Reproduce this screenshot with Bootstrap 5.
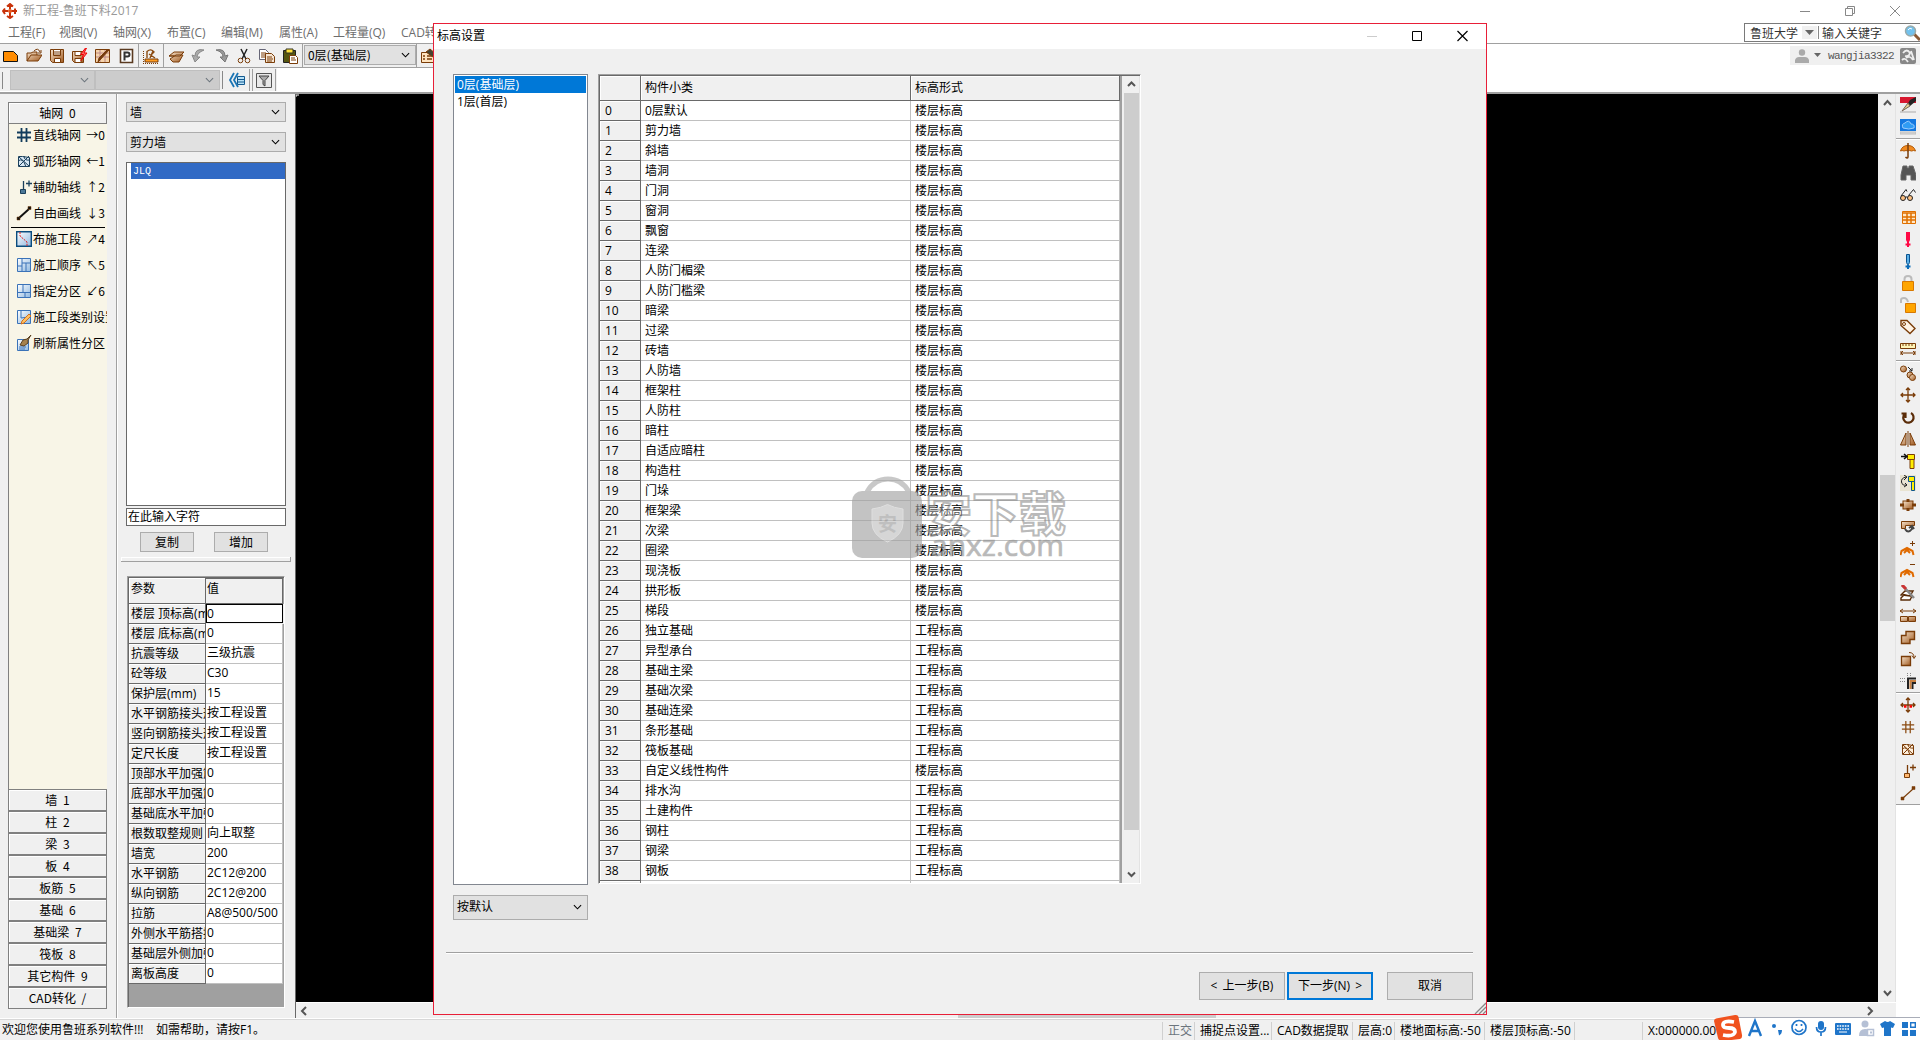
<!DOCTYPE html>
<html lang="zh-CN">
<head>
<meta charset="utf-8">
<title>新工程-鲁班下料2017</title>
<link href="https://cdn.jsdelivr.net/npm/bootstrap@5.3.0/dist/css/bootstrap.min.css" rel="stylesheet">
<style>
body{width:1920px;height:1040px;overflow:hidden;background:#f0f0f0;color:#000;font:12px/16px "Open Sans","Noto Sans CJK SC",sans-serif;white-space:nowrap}
svg{display:block;flex:none}
.sun{font-family:"Noto Sans CJK SC",sans-serif}
.app{width:1920px;height:1040px;overflow:hidden}
.titlebar{height:23px;background:#fff;color:#999;padding:0 0 1px 2px}
.titlebar .caption{margin-left:5px}
.winbtns{gap:33px;padding-right:19px}
.menus{height:20px;background:#fff;color:#6d6d6d}
.menus span{display:block;line-height:20px}
.searchbox{width:176px;height:19px;border:1px solid #7a7a7a;border-right:0;color:#333;background:#fff;padding-left:5px}
.band1{height:25px;border-top:1px solid #a0a0a0;background:#fff}
.strip{height:24px;background:#f0f0f0;border-bottom:1px solid #a0a0a0}
.grp{height:24px;border-right:1px solid #a0a0a0}
.grp-file{padding:0 4px 0 2.5px;gap:7.1px}
.grp-draw{padding:0 4px}
.grp-edit{padding:0 4px 0 4px;gap:6.8px}
.combo{background:#e1e1e1;border:1px solid #acacac;padding:0 5px 0 3px}
.combo.off{background:#ccc;border-color:#bfbfbf}
.userbox{width:130px;height:19px;margin-top:2px;background:#f0f0f0;color:#555}
.mono{font-family:"Liberation Mono",monospace;font-size:10px}
.band2{height:26px;background:#fff;border-bottom:2px solid #a0a0a0}
.band2 .strip{border:0;height:23px}
.work{height:925px}
.navcol{width:117px;border-right:1px solid #a0a0a0;padding:8px 9px 0 8px}
.navbtn{height:22px;width:99px;border:1px solid #808080;box-shadow:inset 1px 1px #fff;background:#f0f0f0;line-height:19px;text-align:center;word-spacing:3px}
.cream{width:99px;height:665px;background:#f8f5e7;border-left:1px solid #808080;overflow:hidden}
.tool{height:26px;padding:0 2px 4px 7px;overflow:hidden}
.tool b{font-weight:400;margin-left:1px;flex:1}
.tool i{font-style:normal;flex:none}
.toolline{border-top:1px solid #000;margin:-1px 2px 0 2px;height:1px}
.propcol{width:179px;border-right:1px solid #696969;padding:8px 10px 0 8px;border-left:1px solid #fff}
.pick{width:160px;height:20px;margin-bottom:10px;border:1px solid #acacac}
.names{width:160px;height:344px;background:#fff;border:1px solid #696969;padding:0 0 0 4px}
.names div{height:16px;background:#316ac5;color:#fff;line-height:17px;padding-left:2px}
.entry{width:160px;height:18px;margin-top:2px;background:#fff;border:1px solid #696969;line-height:14px;padding-left:1px}
.small-btn{width:54px;height:20px;background:#e1e1e1;border:1px solid #acacac;line-height:17px;text-align:center}
.splitbar{height:5px;width:170px;margin:5px 0 14px -5px;border:solid #a0a0a0;border-width:0 1px 1px 0;box-shadow:inset 1px 1px #fff}
.pgrid{width:158px;height:432px;margin-left:1px;border:1px solid #a0a0a0;border-right-color:#fff;border-bottom-color:#fff;box-shadow:inset 1px 1px #696969;padding:1px 0 0 1px;background:#a0a0a0}
.prow{height:20px}
.prow .k{width:77px;overflow:hidden;background:#f0f0f0;border-right:1px solid #696969;border-bottom:1px solid #696969;line-height:20px;padding-left:2px;box-shadow:inset 1px 1px #fff}
.prow .v{width:77px;overflow:hidden;background:#fff;border-right:1px solid #c0c0c0;border-bottom:1px solid #c0c0c0;line-height:17px;padding-left:1px}
.prow.hd{height:26px}.prow.hd .k{line-height:22px}.prow.hd .v{background:#f0f0f0;line-height:20px;border-top:1px solid #696969;border-color:#696969}
.prow.cur .v{border:1px solid #000;padding-left:0;line-height:17px;height:19px}
.prow.cur{background:#f0f0f0}
.canvas{width:1582px;height:908px;background:#000}
.vsb{width:18px;padding-left:1px;background:#f0f0f0;border-right:1px solid #e3e3e3}
.vsb .thumb{width:15px;background:#cdcdcd}
.hsb{height:17px;background:#f0f0f0;border-top:1px solid #fff}
.hthumb{width:258px;height:15px;background:#cdcdcd;margin:0 644px 0 auto}
.side{width:24px;background:#fff}
.side .set{background:#f0f0f0;border-bottom:1px solid #a0a0a0;margin-bottom:1px}
.side .cell{height:22px}
.status{height:21px;border-top:1px solid #d7d7d7;box-shadow:0 -1px #fff;padding-left:2px;line-height:19px;background:#f0f0f0}
.status .pane{border-left:1px solid #d0d0d0;padding-left:5px;height:18px;margin-top:2px;line-height:17px}
.dialog-win{position:absolute;left:433px;top:23px;width:1054px;height:992px;border:1px solid #e81f38;background:#f0f0f0}
.dlg-title{height:25px;background:#fff;padding:0 17px 2px 3px}
.floors{width:135px;height:811px;background:#fff;border:1px solid #828790;padding:1px}
.floors div{height:17px;line-height:17px;padding-left:2px}
.floors .on{background:#0078d7;color:#fff}
.bigcombo{width:135px;height:25px;margin-top:10px;padding-bottom:1px}
.grid{width:543px;height:810px;border:1px solid #a0a0a0;border-right-color:#fff;border-bottom-color:#fff;box-shadow:inset 1px 1px #696969;padding:1px 0 0 1px;overflow:hidden}
.rows{width:523px;height:807px;overflow:hidden;background:#a0a0a0}
.g{height:20px}
.g .n{width:41px;background:#f0f0f0;border-right:1px solid #696969;border-bottom:1px solid #696969;box-shadow:inset 1px 1px #fff;padding-left:5px;line-height:19px}
.g .a{width:270px;background:#fff;border-right:1px solid #c0c0c0;border-bottom:1px solid #c0c0c0;padding-left:4px;line-height:19px}
.g .b{width:209px;background:#fff;border-right:1px solid #c0c0c0;border-bottom:1px solid #c0c0c0;padding-left:4px;line-height:19px}
.g.hd{height:25px}.g.hd div{background:#f0f0f0;border-color:#696969;line-height:24px;box-shadow:inset 1px 1px #fff}
.rule{height:2px;width:1027px;margin:32px 0 0 12px;background:#a0a0a0;border-bottom:1px solid #fff}
.dbtn{width:86px;height:28px;background:#e1e1e1;border:1px solid #adadad;line-height:25px;text-align:center;word-spacing:2px}
.dbtn.def{border:2px solid #0078d7;line-height:23px}
.grip{position:absolute;right:0;bottom:0}
.wmark{position:absolute;left:850px;top:475px;opacity:.62}
.ime{position:absolute;left:1712px;top:1014px}
</style>
<script src="https://cdn.jsdelivr.net/npm/bootstrap@5.3.0/dist/js/bootstrap.bundle.min.js"></script>
</head>
<body>
<svg width="0" height="0" class="position-absolute"><defs>
<linearGradient id="br" x1="0" y1="0" x2="1" y2="1"><stop offset="0" stop-color="#f6e3cd"/><stop offset="1" stop-color="#a05a20"/></linearGradient>
<linearGradient id="bl" x1="0" y1="0" x2="1" y2="1"><stop offset="0" stop-color="#fff"/><stop offset="1" stop-color="#8fb8e0"/></linearGradient>
<symbol id="chev" viewBox="0 0 10 6"><path d="M1 1l4 4 4-4" fill="none" stroke="currentColor" stroke-width="1.2"/></symbol>
</defs></svg>
<div class="app d-flex flex-column">
  <div class="titlebar d-flex align-items-center">
    <svg width="16" height="16" viewBox="0 0 16 16" fill="none" stroke="#c8320a" stroke-width="2"><path d="M8 1v5M8 9v6M1 8h5M8 8h7M5 3.500L8 1l3 2.500M5 13l3 2 3-2M3 5.500L1 8l2 3M13 5.500V11"/><circle cx="8" cy="8" r="2" fill="#e85a20" stroke="none"/></svg>
    <span class="caption me-auto">新工程-鲁班下料2017</span>
    <div class="winbtns d-flex align-items-center">
      <svg width="12" height="12" stroke="#888"><path d="M1 6.500h10"/></svg>
      <svg width="12" height="12" stroke="#888" fill="none"><path d="M1.500 3.500h7v7h-7zM3.500 3V1.500h7v7H9"/></svg>
      <svg width="12" height="12" stroke="#888"><path d="M1 1l10 10M11 1L1 11"/></svg>
    </div>
  </div>
  <div class="menus d-flex">
    <div class="d-flex me-auto ps-2" id="menuItems"></div>
    <div class="searchbox d-flex align-items-center sun">
      <span>鲁班大学</span>
      <svg class="ms-1" width="15" height="13"><rect width="15" height="13" fill="#f0f0f0"/><path d="M3 4h9l-4.500 5z" fill="#666"/></svg>
      <svg width="5" height="15" stroke="#888"><path d="M1.500 1v13"/></svg>
      <span class="me-auto">输入关键字</span>
      <svg width="16" height="16" viewBox="0 0 16 16"><path d="M10 9l6 6" stroke="#8b5a35" stroke-width="3"/><circle cx="6.500" cy="6" r="5" fill="#72c2ee" stroke="#9aa" stroke-width="1.500"/><path d="M4 5q2-3 4-1" stroke="#fff" fill="none"/></svg>
    </div>
  </div>
  <div class="band1 d-flex">
    <div class="strip d-flex me-auto" style="width:640px" id="topTools"></div>
    <div class="userbox d-flex align-items-center">
      <svg class="ms-1" width="16" height="16" fill="#aaa"><circle cx="8" cy="4.500" r="3.200"/><path d="M1 15v-3q1-3 4-3h6q3 0 4 3v3z"/></svg>
      <svg class="ms-1" width="8" height="8"><path d="M0 1h7L3.500 5z" fill="#666"/></svg>
      <span class="mono" style="margin-left:6px;font-size:11px;letter-spacing:-.6px">wangjia3322</span>
      <svg class="ms-auto me-1" width="16" height="16"><rect width="16" height="16" rx="2" fill="#888"/><path d="M3 5q4-5 7 0-1 4-5 3M6 10q4-3 7 2M2 12q3-3 6 2M11 3l3 9" stroke="#eee" stroke-width="1.800" fill="none"/></svg>
    </div>
  </div>
  <div class="band2 d-flex">
    <div class="strip d-flex align-items-center" style="width:277px">
      <svg width="10" height="20"><path d="M2.500 2v17" stroke="#888"/></svg>
      <div class="combo off d-flex align-items-center justify-content-end text-secondary" style="width:85px;height:20px"><svg width="9" height="6"><use href="#chev"/></svg></div>
      <div class="combo off d-flex align-items-center justify-content-end text-secondary" style="width:125px;height:20px"><svg width="9" height="6"><use href="#chev"/></svg></div>
      <svg width="56" height="22"><path d="M2.500 2v18" stroke="#888"/><path d="M14 4l-4 7 4 7M18 4l-4 7 4 7" fill="none" stroke="#1a75b5" stroke-width="1.800"/><path d="M17.500 7.500h7v8h-7zM18 10.500h6M18 13h6" fill="#b8e2f8" stroke="#145a90"/><path d="M29.500 0v22M32.500 0v22" stroke="#a0a0a0"/><path d="M36.500 4.500h15v14h-15z" fill="#e8e8e8" stroke="#555"/><path d="M39 7h10l-4 4.500V17l-2-1.500v-4z" fill="#aaa" stroke="#444"/><path d="M55.500 0v22" stroke="#a0a0a0"/></svg>
    </div>
  </div>
  <div class="work d-flex">
    <div class="navcol sun">
      <div class="navbtn">轴网 0</div>
      <div class="cream" id="cream"></div>
      <div id="navBottom"></div>
    </div>
    <div class="propcol">
      <div class="pick combo d-flex align-items-center justify-content-between sun">墙<svg width="9" height="6"><use href="#chev"/></svg></div>
      <div class="pick combo d-flex align-items-center justify-content-between sun">剪力墙<svg width="9" height="6"><use href="#chev"/></svg></div>
      <div class="names"><div class="mono">JLQ</div></div>
      <div class="entry sun">在此输入字符</div>
      <div class="d-flex sun" style="padding:6px 0 0 14px;gap:20px"><div class="small-btn">复制</div><div class="small-btn">增加</div></div>
      <div class="splitbar"></div>
      <div class="pgrid" id="pgrid"></div>
    </div>
    <div class="d-flex flex-column">
      <div class="d-flex">
        <div class="canvas"><svg width="4" height="4"><path d="M0 3V1h3" stroke="#fff" fill="none"/></svg></div>
        <div class="vsb d-flex flex-column align-items-center">
          <svg width="15" height="18"><path d="M4 11l3.500-4 3.500 4" stroke="#555" stroke-width="2" fill="none"/></svg>
          <div class="thumb" style="height:146px;margin-top:363px"></div>
          <svg class="mt-auto" width="15" height="18"><path d="M4 7l3.500 4L11 7" stroke="#555" stroke-width="2" fill="none"/></svg>
        </div>
      </div>
      <div class="hsb d-flex">
        <svg width="16" height="15"><path d="M10 4L6 8l4 4" stroke="#555" stroke-width="2" fill="none"/></svg>
        <div class="hthumb"></div>
        <svg width="36" height="15"><path d="M8 4l4 4-4 4" stroke="#555" stroke-width="2" fill="none"/></svg>
      </div>
    </div>
    <div class="side" id="side"></div>
  </div>
  <div class="status d-flex">
    <div style="width:1160px">欢迎您使用鲁班系列软件!!! &nbsp;&nbsp; 如需帮助，请按F1。</div>
    <div class="pane text-secondary" style="width:32px">正交</div>
    <div class="pane" style="width:77px">捕捉点设置...</div>
    <div class="pane" style="width:81px">CAD数据提取</div>
    <div class="pane" style="width:42px">层高:0</div>
    <div class="pane" style="width:90px">楼地面标高:-50</div>
    <div class="pane" style="width:90px">楼层顶标高:-50</div>
    <div class="pane" style="width:68px"></div>
    <div class="pane">X:000000.00</div>
  </div>
</div>

<div class="dialog-win">
  <div class="dlg-title d-flex align-items-center">
    <span class="me-auto">标高设置</span>
    <svg width="104" height="12" fill="none"><path d="M2 6.500h10" stroke="#ccc"/><path d="M47.500 1.500h9v9h-9z" stroke="#000"/><path d="M92.500 1l10 10M102.500 1l-10 10" stroke="#000" stroke-width="1.200"/></svg>
  </div>
  <div class="d-flex" style="padding:25px 0 0 19px;gap:10px">
    <div>
      <div class="floors"><div class="on">0层(基础层)</div><div>1层(首层)</div></div>
      <div class="combo bigcombo d-flex align-items-center justify-content-between">按默认<svg width="9" height="6"><use href="#chev"/></svg></div>
    </div>
    <div class="grid d-flex">
      <div class="rows" id="rows"></div>
      <div class="vsb flex-grow-1 d-flex flex-column align-items-center">
        <svg width="15" height="17"><path d="M4 10l3.500-3.500L11 10" stroke="#555" stroke-width="2" fill="none"/></svg>
        <div class="thumb" style="height:737px"></div>
        <svg class="mt-auto" width="15" height="17"><path d="M4 6.500l3.500 3.500L11 6.500" stroke="#555" stroke-width="2" fill="none"/></svg>
      </div>
    </div>
  </div>
  <div class="rule"></div>
  <div class="d-flex justify-content-end" style="padding:18px 13px 0 0"><div class="dbtn">&lt; 上一步(B)</div><div class="dbtn def" style="margin:0 14px 0 2px">下一步(N) &gt;</div><div class="dbtn">取消</div></div>
  <svg class="grip" width="12" height="12"><path d="M1 12L12 1M5 12l7-7M9 12l3-3" stroke="#888" stroke-width="1.300"/></svg>
</div>

<svg class="wmark" width="220" height="86">
  <path d="M17 17Q24 4 38 4t21 13" fill="none" stroke="#a8a8a8" stroke-width="5"/>
  <rect x="2" y="16" width="70" height="67" rx="10" fill="#a0a0a0"/>
  <path d="M22 34q9-1 15.500-4.500Q44 33 53 34v14q0 12-15.500 19Q22 60 22 48z" fill="#bdbdbd" stroke="#ccc"/>
  <text x="28" y="56" font-size="19" font-weight="700" fill="#999" font-family="Noto Sans CJK SC">安</text>
  <text x="75" y="56" font-size="47" font-weight="700" fill="#fff" fill-opacity=".5" stroke="#909090" stroke-width="2" font-family="Noto Sans CJK SC" textLength="141">安下载</text>
  <text x="81" y="81" font-size="30" fill="#8f8f8f" stroke="#8f8f8f" stroke-width=".7" font-family="Open Sans" textLength="133">anxz.com</text>
</svg>

<svg class="ime" width="208" height="26" viewBox="0 0 208 26">
  <path d="M12 3.500h196V26H12z" fill="#fff"/><path d="M26 3.500h182" stroke="#a9adb8"/>
  <path d="M2 7q0-2 2-2.500L23 1q3-.5 3.500 2L30 21q.5 3-2 4l-17 2q-4 0-5-3z" fill="#f0521e"/>
  <path d="M22 8q-11-2-11 3 0 3 6 3t6 4q-1 5-12 3" fill="none" stroke="#fff" stroke-width="3.800"/>
  <g fill="none" stroke="#1f75c9" stroke-width="2.400"><path d="M37 22l6-15 6 15M39.500 17h8"/><circle cx="87" cy="13.500" r="7" stroke-width="1.700"/><path d="M83 15q4 5 8 0" stroke-width="1.500"/><path d="M84.500 10v2M89.500 10v2" stroke-width="1.700"/><path d="M104.500 13q0 5 4.500 5t4.500-5M109 18v4" stroke-width="1.700"/></g>
  <g fill="#1f75c9"><circle cx="62" cy="12" r="2"/><path d="M66 16h4q0 4-3 5.500z"/><rect x="106" y="7" width="6" height="9" rx="3"/><rect x="123" y="9" width="16" height="12" rx="1"/><path d="M168 10l5-3q3 2 5 0l5 3-2 4-2-.5V22h-7v-8.500l-2 .5z"/><path d="M190 8h6v6h-6zM190 16h6v6h-6zM198 16h6v6h-6z"/></g>
  <path d="M198.700 8.700h4.600v4.600h-4.600z" fill="none" stroke="#1f75c9" stroke-width="1.400"/>
  <path d="M125 12h12M125 15h12" stroke="#fff" stroke-width="1.600" stroke-dasharray="1.600 1"/><path d="M127 18h8" stroke="#fff"/>
  <g fill="#b5c0d5"><circle cx="153" cy="10" r="3.500"/><path d="M147 22q0-7 6-7 3 0 4 1v6z"/><path d="M155.500 15.500h6v6h-6z" fill="#fff" stroke="#b5c0d5" stroke-width="1.500"/><path d="M158 17.500h2v2h-2z"/></g>
</svg>

<script>
const $ = id => document.getElementById(id);
const svg = (body, w = 16, h = 16) => `<svg width="${w}" height="${h}" viewBox="0 0 16 16" fill="none" stroke="#7a3c08">${body}</svg>`;

$('menuItems').innerHTML = [['工程(F)',51],['视图(V)',54],['轴网(X)',54],['布置(C)',54],['编辑(M)',58],['属性(A)',54],['工程量(Q)',68],['CAD转化(D)',80]]
  .map(([t,w]) => `<span style="width:${w}px">${t}</span>`).join('');

/* main toolbar */
const file = [
 '<path d="M.5 3.500h10l4 4V13.500H.5z" fill="#ff8c00" stroke="#111"/>',
 '<path d="M1 13V5h4l2-1h4v3M1 13l4-6h11l-4 6z" fill="url(#br)"/><path d="M8 3q4-4 6 1m1-2v3h-3"/>',
 '<path d="M1.500 1.500h13v13h-11l-2-2z" fill="url(#br)"/><path d="M4.500 1.500h7v6h-7zM5.500 10.500h6v4h-6z" fill="#fff"/><path d="M5 4h6M5 6h6"/>',
 '<path d="M.5 3.500h11v11h-9l-2-2z" fill="url(#br)"/><path d="M3 10.500h6v4H3zM3 3.500h6v4H3z" fill="#fff"/><path d="M13.500 0l-5 6.500h3l-2.500 6 6-7.500h-3l2.500-5z" fill="#f66" stroke="#e00"/>',
 '<path d="M.5 1.500h14v13H.5z" fill="#f5d3aa"/><path d="M1 5h13M1 9h13M5 2v12M10 2v12" stroke="#b88"/><path d="M14 2L5 12l-2 2 1-4 8-8z" fill="#733c10"/>',
 '<path d="M2.500 1.500h12v13h-12z" fill="#fff" stroke="#5a3a20" stroke-width="1.600"/><path d="M6.500 12.500V4.500h3q2 0 2 2t-2 2h-3" stroke="#333" stroke-width="2"/>'];
const draw = ['<path d="M2 11h13v3H2z" fill="#ff9c20"/><path d="M4 10V3.500Q8 0 11 4l-3 3M6 6l6 4M10 3l-3 7" stroke="#8a4a10" stroke-width="1.400"/><path d="M0 15.500h15M.5 3v12" stroke-dasharray="1 1"/>'];
const edit = [
 '<path d="M1 8l5-4h10l-4 4zM2 11l3 3h6l4-7H8z" fill="url(#br)"/><path d="M1 8h5"/>',
 '<path d="M14 2Q5 0 5 8l-3-1 3 7 5-5-3 0q0-4 7-7z" fill="#aaa" stroke="#888" transform="translate(-1)"/>',
 '<path d="M2 2q9-2 9 6l3-1-3 7-5-5h3Q9 4 2 2z" fill="#999" stroke="#777"/>',
 '<path d="M5 1l5 10M11 1L6 11" stroke="#222" stroke-width="1.500"/><circle cx="4.500" cy="12.500" r="2.300"/><circle cx="11.500" cy="12.500" r="2.300"/>',
 '<path d="M.5 1.500h6l3 3v7h-9z" fill="#fff" stroke="#667"/><path d="M6.500 5.500h6l3 3v6h-9z" fill="#f6e6d4"/><path d="M2 5h5M2 7h4M2 9h4M8 9h5M8 11h6M8 13h5"/>',
 '<path d="M1.500 2.500h12v12h-12z" fill="#565610" stroke="#222"/><path d="M4 1h7v4H4z" fill="#ffe23c" stroke="#332"/><path d="M7.500 7.500h6l2 2v6h-8z" fill="#fff"/><path d="M9 10h4M9 12h5"/>'];
const group = (a, cls) => `<div class="grp ${cls} d-flex align-items-center">${a.map(i => svg(i)).join('')}</div>`;
$('topTools').innerHTML = group(file, 'grp-file') + group(draw, 'grp-draw') + group(edit, 'grp-edit') +
 `<div class="combo d-flex align-items-center justify-content-between sun" style="width:112px;height:20px;margin:1px 0 0 1px">0层(基础层)<svg width="9" height="6"><use href="#chev"/></svg></div>
  <div style="border-left:1px solid #a0a0a0;padding:4px 3px;height:24px">${svg('<path d="M1.500 4.500h12v10h-12z" fill="#ffe4c0"/><path d="M3 8h2M7 8h5M3 11h2M7 11h5" stroke-width="1.600"/><path d="M6 4l4-3 6 5-3 3z" fill="#443"/>')}</div>`;

/* component palette */
const hash = (c, w = 1.8) => `<path d="M1 5.500h14M1 10.500h14M5.500 1v14M10.500 1v14" stroke="${c}" stroke-width="${w}"/>`;
const arc = (c, f) => `<path d="M2.500 3.500h4l7 1v9h-11z" fill="${f}" stroke="${c}"/><path d="M3 13L13 3M3 4l10 9M2 8q5-4 8 6M8 3q0 5 6 4" stroke="${c}"/>`;
const node = (c, f) => `<path d="M7.500 2v8M10 4.500h6M13 1.500v6" stroke="${c}" stroke-width="1.300"/><path d="M4.500 10.500h5v4h-5z" fill="${f}" stroke="${c}"/>`;
const line = (c, w = 2) => `<path d="M3 13L13 4" stroke="${c}" stroke-width="${w}"/><path d="M1 12h3v3H1zM12 1.500h3v3h-3z" fill="${c}" stroke-width=".5"/>`;
const area = '<path d="M1.500 1.500h13v13h-13z" fill="url(#bl)" stroke="#3a72b8"/>';
const items = [
 [hash('#123c5c'),'直线轴网','→0'],[arc('#1b405c','#d8e8f5'),'弧形轴网','←1'],[node('#1b405c','#4c7898'),'辅助轴线','↑2'],[line('#111'),'自由画线','↓3'],
 ['<path d="M.7.7h14.600v14.600H.7z" fill="url(#bl)" stroke="#0a4c7e" stroke-width="1.400"/><path d="M4 1v4l7 6v4" stroke="#e02020" stroke-dasharray="2 1"/>','布施工段','↗4'],
 [area+'<path d="M6 2v12M2 9h4M6 6h8M10 6v8" stroke="#3a72b8"/>','施工顺序','↖5'],
 [area+'<path d="M2 9.500h12M7 2v7M9 10v4" stroke="#3a72b8"/>','指定分区','↙6'],
 [area+'<path d="M5 2v7l8-1" stroke="#3a72b8"/><path d="M13 5L6 12l-1 3 3-1 7-7z" fill="#ffc060" stroke="#d07020"/>','施工段类别设置',''],
 ['<path d="M1.500 4.500h11v11h-11z" fill="url(#bl)" stroke="#3a72b8"/><path d="M3 12h7M3 14h6" stroke="#3a72b8"/><path d="M15 0l-4 4-4 1-3 5 4 1 4-3 0-3z" fill="#a5814c" stroke="#5b4020"/>','刷新属性分区','']];
$('cream').innerHTML = items.map(([i,t,k],n) => (n==4?'<div class="toolline"></div>':'') + `<div class="tool d-flex align-items-center">${svg(i)}<b>${t}</b><i>${k}</i></div>`).join('');
$('navBottom').innerHTML = ['墙 1','柱 2','梁 3','板 4','板筋 5','基础 6','基础梁 7','筏板 8','其它构件 9','CAD转化 /'].map(t => `<div class="navbtn">${t}</div>`).join('');

/* parameters */
const props = [['参数','值'],['楼层 顶标高(mm)','0'],['楼层 底标高(mm)','0'],['抗震等级','三级抗震'],['砼等级','C30'],['保护层(mm)','15'],['水平钢筋接头形式','按工程设置'],['竖向钢筋接头形式','按工程设置'],['定尺长度','按工程设置'],['顶部水平加强筋','0'],['底部水平加强筋','0'],['基础底水平加强筋','0'],['根数取整规则','向上取整'],['墙宽','200'],['水平钢筋','2C12@200'],['纵向钢筋','2C12@200'],['拉筋','A8@500/500'],['外侧水平筋搭接','0'],['基础层外侧加强筋','0'],['离板高度','0']];
$('pgrid').innerHTML = props.map(([k,v],n) => `<div class="prow d-flex ${n==0?'hd':n==1?'cur':''}"><div class="k">${k}</div><div class="v">${v}</div></div>`).join('');

/* elevation table */
const names = '0层默认 剪力墙 斜墙 墙洞 门洞 窗洞 飘窗 连梁 人防门楣梁 人防门槛梁 暗梁 过梁 砖墙 人防墙 框架柱 人防柱 暗柱 自适应暗柱 构造柱 门垛 框架梁 次梁 圈梁 现浇板 拱形板 梯段 独立基础 异型承台 基础主梁 基础次梁 基础连梁 条形基础 筏板基础 自定义线性构件 排水沟 土建构件 钢柱 钢梁 钢板'.split(' ');
const row = (n,a,b,c='') => `<div class="g d-flex ${c}"><div class="n">${n}</div><div class="a">${a}</div><div class="b">${b}</div></div>`;
$('rows').innerHTML = row('','构件小类','标高形式','hd') + names.map((t,n) => row(n, t, n < 26 || n == 33 ? '楼层标高' : '工程标高')).join('') + row('','','');

/* side toolbar */
const chevron = '<path d="M1.500 12l1-4L8 5l5.500 3 1 4M5 10l3-3 3 3" stroke="#e06a00" stroke-width="2"/>';
const move = '<path d="M8 1v14M1 8h14M6 3l2-2 2 2M6 13l2 2 2-2M3 6L1 8l2 2M13 6l2 2-2 2" stroke-width="1.300"/>';
const sets = [
 ['<path d="M0 1h16v14H0z" fill="#eee" stroke="none"/><path d="M0 0h16v6H0z" fill="#d81830" stroke="none"/><path d="M0 15h16" stroke="#aaa"/><path d="M16 0l-6 3-3 5 3 1 6-5z" fill="#222" stroke="none"/><path d="M8 6l-6 8 8-5z" fill="#e8cf90" stroke="#765"/>',
  '<path d="M0 13h16v2H0z" fill="#ddd" stroke="#bbb"/><path d="M0 0h16v12H0z" fill="#1478e0" stroke="none"/><path d="M3 9q-2-4 2-5 4-4 6 1 4 0 3 4-5 2-11 0z" fill="#2f9cf4" stroke="#9cf"/>'],
 ['<path d="M.5 8Q2 2.500 8 2.500T15.500 8q-2-1-4 0-2-1-3.500 0-2-1-4 0-2-1-3.500 0z" fill="#f08a20" stroke="#b05a08"/><path d="M8 0v14q-.5 2-2.500 0" stroke-width="1.500"/>',
  '<path d="M3 1h4v2h2V1h4l3 9v5h-5v-5H6v5H1v-5z" fill="#555" stroke="#666"/>',
  '<circle cx="3" cy="11" r="2.500" fill="#ffc080" stroke="#222"/><circle cx="10" cy="11" r="2.500" fill="#ffc080" stroke="#222"/><path d="M1 9l5-6.500 1 2M8.500 8.500l5-6 2 3M5.500 10h2" stroke="#222"/>',
  '<path d="M2.500 2.500h13v12h-13z" fill="#ffe8c8" stroke="#e07000"/><path d="M2 4h14M3 8h12M3 11h12M7 4v10M11 4v10" stroke="#e07000" stroke-width="1.500"/>',
  '<path d="M6 1h4v8l-1 2H7l-1-2z" fill="#ff0a46" stroke="none"/><path d="M5.500 13.500h5M8 11v5" stroke="#ff0a46" stroke-width="2"/>',
  '<path d="M6.500 1.500h3v8l-1 2h-1l-1-2z" fill="#5bb0e8" stroke="#0a5490"/><path d="M5.500 13.500h5M8 12v4" stroke="#0a6cb8" stroke-width="2"/>',
  '<path d="M4.500 7V4q0-3 3.500-3t3.500 3v3" stroke="#bbb" stroke-width="2"/><path d="M2.500 6.500h11v9h-11z" fill="#ffa500" stroke="#d87800"/>',
  '<path d="M1 6V3q0-2 3-2t4 4" stroke="#bbb" stroke-width="2"/><path d="M5.500 6.500h10v9h-10z" fill="#ffa500" stroke="#d87800"/>',
  '<path d="M1 1.500h6l8 8-5 5-9-8z" fill="#fff3e4" stroke-width="1.400"/><circle cx="4" cy="5" r="1.500"/>',
  '<path d="M.5 2.500h15v5H.5z" fill="#fff5b8"/><path d="M3 3v2M6 3v2M9 3v2M12 3v2M1 12h14M1 10v4M15 10v4M3 10l-2 2 2 2M13 10l2 2-2 2"/>'],
 ['<circle cx="3.500" cy="4" r="3" fill="url(#br)"/><circle cx="10" cy="10" r="3" fill="url(#br)"/><circle cx="12.500" cy="12.500" r="3" fill="url(#br)"/><path d="M8 2l4 4m0-3v3H9" stroke="#222"/>',
  move,'<path d="M4.500 5a5.200 5.200 0 1 0 6.500-1M5.500 9V4.500H1.500" stroke="#5a2c08" stroke-width="2.200"/>',
  '<path d="M6 2v12H.5zM10 2v12h5.500z" fill="url(#br)"/><path d="M8 0v16"/>',
  '<path d="M7.500 1.500h7v5h-7zM10 6.500h4v9h-4z" fill="#fe0"/><path d="M1 3.500h5M4 1l3 2.500L4 6" stroke="#111" stroke-width="1.500"/>',
  '<path d="M0 0h16v16H0z" fill="#e9e4d2" stroke="none"/><path d="M8.500 1.500h6v5h-6zM11.500 6.500h3v9h-3z" fill="#fe0" stroke="#0a5490"/><path d="M6 2Q1 3 1.500 7T7 10M4 0l3 2-3 3M5 8l2 2-3 2" stroke="#222"/>',
  '<rect x="3" y="4" width="10" height="8" fill="url(#br)"/><path d="M0 8h4M12 8h4M8 2v3M8 11v3" stroke-width="3"/>',
  '<path d="M1.500 2.500h13v4h-9v3h-4z" fill="url(#br)"/><path d="M5 10q3 5 7 0V7m-3 2l3-2 2 3" stroke="#444" stroke-width="2"/>',
  '<g transform="translate(-1 2)">'+chevron+'</g><path d="M12.500 0v5M10 2.500h5"/>','<g transform="translate(-1 2)">'+chevron+'</g><path d="M10 1.500h5"/>',
  '<path d="M1 10l4-4h8l-3 5zM1 13l3-3 8 1-2 4H1z" fill="#fff" stroke="#5a2c08" stroke-width="1.400"/><path d="M2 0l12 13" stroke="#888" stroke-width="2.500"/><path d="M2 0l4 4" stroke="#c33" stroke-width="3"/>',
  '<path d="M0 4h16M3 2L0 4l3 2M13 2l3 2-3 2"/><path d="M.5 9.500h7v5h-7zM8.500 9.500h7v5h-7z" fill="url(#br)"/>',
  '<path d="M6 2.500h8.500v8H10v4H1.500v-8H6z" fill="url(#br)" stroke-width="1.400"/>',
  '<path d="M1.500 5.500h9v9h-9z" fill="url(#br)" stroke-width="1.300"/><path d="M9 1.500q5 0 5 5m-2-2l2 3 2-3"/>',
  '<path d="M0 5.500h6M0 8.500h6M7.500 0v4M10.500 0v4" stroke="#888" stroke-dasharray="1 1"/><path d="M16 5.500H8V16M16 10h-3.500v6" stroke="#222" stroke-width="2"/><path d="M10.500 16V8H16" stroke="#c98040" stroke-width="2"/>'],
 [move+'<path d="M4 9.500h2.500M9.500 9.500H12" stroke="#f00" stroke-width="2.500"/>','<g transform="translate(1 1) scale(.88)">'+hash('#8a4a10',1.4)+'</g>',arc('#7a3c08','#fff0dd'),node('#7a3c08','#ffb870'),line('#7a3c08',1.1)]];
$('side').innerHTML = sets.map(s => `<div class="set">${s.map(i => `<div class="cell d-flex align-items-center justify-content-center">${svg(i)}</div>`).join('')}</div>`).join('');
</script>
</body>
</html>
